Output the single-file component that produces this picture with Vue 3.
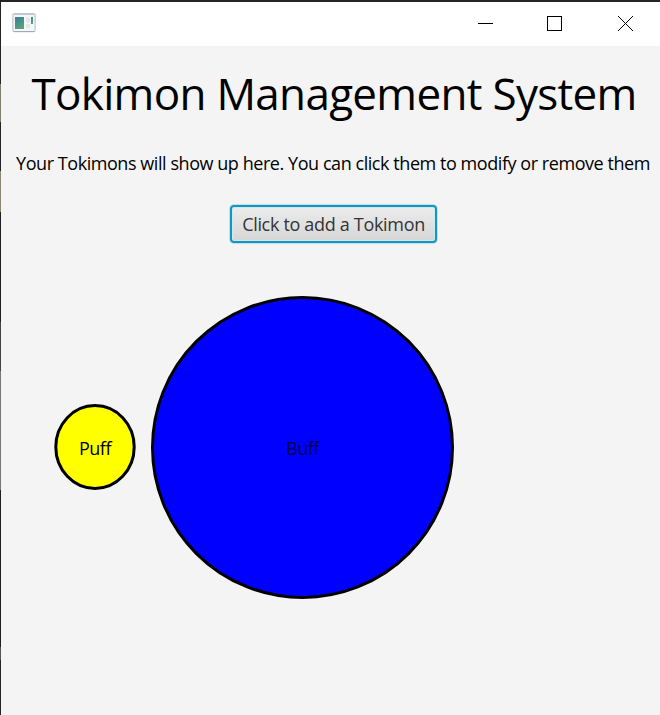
<script setup>
const tokimons = [
  { name: 'Puff', kind: 'puff', width: 82, height: 87, cy: 43, rx: 39.2, ry: 41.5, fill: '#ffff00' },
  { name: 'Buff', kind: 'buff', width: 303, height: 303, cy: 151.5, rx: 150, ry: 150, fill: '#0000ff' },
]
</script>

<template>
  <div class="desktop">
    <div class="window">
      <header class="titlebar">
        <svg class="app-icon" width="24" height="20" viewBox="0 0 24 20">
          <defs>
            <linearGradient id="pane" x1="0" y1="0" x2="0.5" y2="1">
              <stop offset="0" stop-color="#3d79a0" />
              <stop offset="1" stop-color="#55a577" />
            </linearGradient>
          </defs>
          <rect x="0.9" y="0.7" width="22.2" height="18" rx="1.2" fill="#f4f6f9" stroke="#b4bac3" />
          <path d="M1.5 1.5H22.5" stroke="#c3cad4" />
          <path d="M1.5 18.5H22.5" stroke="#a4aab2" />
          <rect x="3" y="4" width="9" height="12" fill="url(#pane)" />
          <path d="M14 4.5h4v5h-4zM14 11h4v4h-4z" fill="#e6e6e9" />
          <rect x="19" y="4" width="2" height="7" fill="url(#pane)" />
        </svg>
        <svg class="controls" width="156" height="16" viewBox="0 0 156 16" fill="none" stroke="#000" shape-rendering="crispEdges">
          <path d="M0 7.5H15" />
          <rect x="69.5" y="0.5" width="14" height="14" />
          <path d="M140 0L155 15M155 0L140 15" />
        </svg>
      </header>
      <main class="content">
        <h1>Tokimon Management System</h1>
        <p>Your Tokimons will show up here. You can click them to modify or remove them</p>
        <button type="button">Click to add a Tokimon</button>
        <section class="tokimons">
          <div v-for="t in tokimons" :key="t.name" class="tokimon">
            <svg :width="t.width" :height="t.height">
              <ellipse :cx="t.width / 2" :cy="t.cy" :rx="t.rx" :ry="t.ry" :fill="t.fill" stroke="#000" stroke-width="3" />
            </svg>
            <span :class="t.kind">{{ t.name }}</span>
          </div>
        </section>
      </main>
    </div>
  </div>
</template>

<style>
body { overflow: hidden; }
</style>

<style scoped>
.desktop {
  box-sizing: border-box;
  width: 660px;
  height: 715px;
  padding: 2px 0 0 1px;
  background: linear-gradient(#262324 0 84px, #817e6c 84px 122px, #262324 122px 171px, #8b8673 171px 212px, #211f20 212px 322px, #444 322px 371px, #777 371px 490px, #211f20 490px 647px, #555 647px 660px, #262320 660px);
  font-family: "Open Sans", "Noto Sans", sans-serif;
  font-kerning: none;
}
.window {
  display: flex;
  flex-direction: column;
  height: 100%;
  background: #f4f4f4;
}
.titlebar {
  display: flex;
  justify-content: space-between;
  align-items: flex-start;
  height: 44px;
  box-sizing: border-box;
  padding: 11px 26px 0 11px;
  background: #fff;
}
.controls { margin-top: 3px; }
.content {
  display: flex;
  flex-direction: column;
  align-items: center;
}
h1 {
  margin: 17px 0 0 7px;
  font-size: 44px;
  line-height: 60px;
  font-weight: 400;
  letter-spacing: -0.69px;
  white-space: nowrap;
  color: #000;
}
p {
  margin: 28px 0 0 5px;
  font-size: 18px;
  line-height: 24px;
  letter-spacing: -0.44px;
  white-space: nowrap;
  color: #000;
}
button {
  box-sizing: border-box;
  width: 207px;
  height: 38px;
  margin: 30px 0 0 6px;
  padding: 0;
  border: 2px solid #1b93bb;
  border-radius: 4px;
  box-shadow: 0 0 0 1px #b5e5f5, inset 0 0 0 1px #c7eaf5;
  background: linear-gradient(#ececec, #d6d6d6);
  font: inherit;
  font-kerning: none;
  font-size: 18px;
  line-height: 24px;
  letter-spacing: -0.32px;
  white-space: nowrap;
  color: #333;
}
.tokimons {
  display: flex;
  align-items: center;
  align-self: flex-start;
  gap: 15px;
  margin: 53px 0 0 53px;
}
.tokimon {
  display: grid;
  place-items: center;
}
.tokimon > * { grid-area: 1 / 1; }
.tokimon svg { display: block; }
.tokimon span {
  margin-top: 1px;
  font-size: 18px;
  line-height: 24px;
  letter-spacing: -0.5px;
  color: #000;
}
.tokimon .buff { color: #00004d; }
</style>
